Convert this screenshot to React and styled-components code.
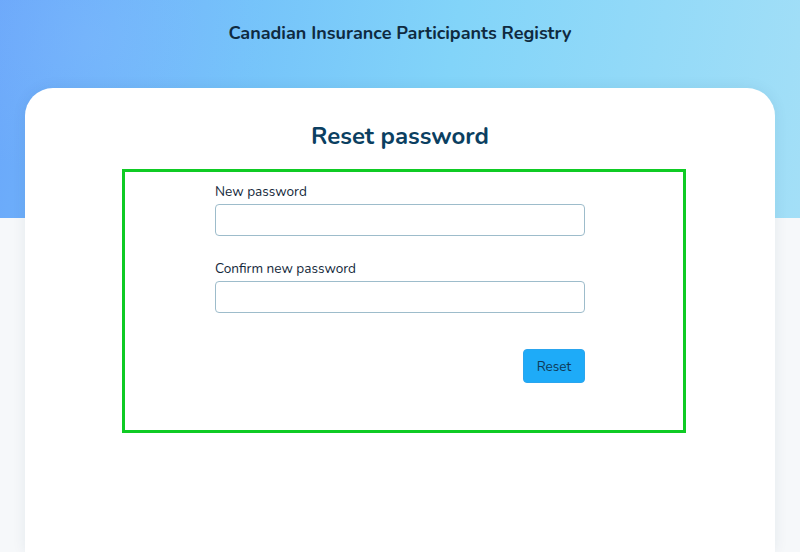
import React from "react";
import styled, { createGlobalStyle } from "styled-components";

const GlobalStyle = createGlobalStyle`
  html, body {
    margin: 0;
    padding: 0;
    height: 100%;
    overflow: hidden;
  }
  body {
    font-family: "Nunito", Lato, "Noto Sans", sans-serif;
    background: #f6f8fa;
  }
`;

const Page = styled.div`
  min-height: 552px;
  display: flex;
  flex-direction: column;
  background:
    radial-gradient(ellipse 220px 120px at 430px 260px, rgba(120, 180, 245, 0.35), transparent 70%),
    radial-gradient(ellipse 260px 200px at 90px 40px, rgba(140, 190, 255, 0.25), transparent 70%),
    linear-gradient(100deg, #6aa7fa 0%, #75c3fa 30%, #82d4f9 55%, #a3dff7 100%) top / 100% 218px no-repeat,
    #f6f8fa;
`;

const Header = styled.header`
  height: 88px;
  padding-top: 22px;
  box-sizing: border-box;
  text-align: center;
  font-size: 18px;
  font-weight: 700;
  color: #0f2a40;
  line-height: 22px;
`;

const Card = styled.main`
  flex: 1;
  margin: 0 25px;
  background: #fff;
  border-radius: 28px 28px 0 0;
  box-shadow: 0 0 14px rgba(30, 60, 90, 0.08);
  padding-top: 34px;
  min-height: 464px;
  box-sizing: border-box;
`;

const Title = styled.h1`
  margin: 0 0 18px;
  text-align: center;
  font-size: 24px;
  line-height: 29px;
  font-weight: 700;
  color: #0b3f61;
`;

const Frame = styled.section`
  width: 564px;
  box-sizing: border-box;
  margin-left: 97px;
  border: 3px solid #0fcb24;
  padding: 12px 0 47px 90px;
`;

const Form = styled.form`
  width: 370px;
  display: flex;
  flex-direction: column;
`;

const Field = styled.div`
  display: flex;
  flex-direction: column;
  gap: 4px;
  margin-bottom: ${(p) => p.$gap}px;
`;

const Label = styled.label`
  display: block;
  height: 16px;
  font-size: 13.6px;
  line-height: 16px;
  color: #14283a;
`;

const Input = styled.input`
  height: 32px;
  box-sizing: border-box;
  border: 1px solid #9dbccb;
  border-radius: 4px;
  padding: 0 10px;
  font: inherit;
  outline: none;
`;

const Actions = styled.div`
  display: flex;
  justify-content: flex-end;
`;

const Button = styled.button`
  width: 62px;
  height: 34px;
  border: 1px solid #2aa5ee;
  border-radius: 4px;
  background: #1eabf8;
  color: #0e3a58;
  font-family: inherit;
  font-size: 13.6px;
  cursor: pointer;
`;

export default function App() {
  return (
    <>
      <GlobalStyle />
      <Page>
        <Header>Canadian Insurance Participants Registry</Header>
        <Card>
          <Title>Reset password</Title>
          <Frame>
            <Form onSubmit={(e) => e.preventDefault()}>
              <Field $gap={25}>
                <Label htmlFor="pw">New password</Label>
                <Input id="pw" type="password" />
              </Field>
              <Field $gap={36}>
                <Label htmlFor="pw2">Confirm new password</Label>
                <Input id="pw2" type="password" />
              </Field>
              <Actions>
                <Button type="submit">Reset</Button>
              </Actions>
            </Form>
          </Frame>
        </Card>
      </Page>
    </>
  );
}
